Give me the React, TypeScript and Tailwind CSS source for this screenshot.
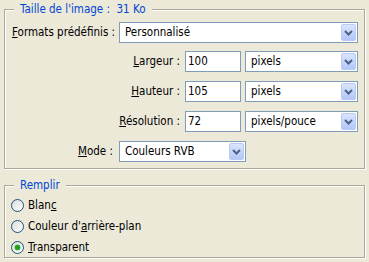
import React from "react";

function Chevron() {
  return (
    <svg width="9" height="6" viewBox="0 0 9 6">
      <path d="M1 1 L4.5 4.5 L8 1" fill="none" stroke="#4D6185" strokeWidth="2" />
    </svg>
  );
}

function Combo({ width, text }: { width: string; text: string }) {
  return (
    <div className={`relative h-[21px] border border-[#7F9DB9] bg-white flex items-center pl-[5px] ${width}`}>
      <span>{text}</span>
      <div className="absolute right-[1px] top-[1px] bottom-[1px] w-[15px] rounded-[2px] border border-[#B9CBF3] bg-gradient-to-b from-[#DAE5FD] to-[#B2C7F8] flex items-center justify-center">
        <Chevron />
      </div>
    </div>
  );
}

function Input({ text }: { text: string }) {
  return (
    <div className="h-[21px] w-[56px] border border-[#7F9DB9] bg-white flex items-center pl-[2px]">
      {text}
    </div>
  );
}

function Radio({ checked, children }: { checked?: boolean; children: React.ReactNode }) {
  return (
    <div className="flex items-center h-[13px]">
      <div className="w-[13px] h-[13px] rounded-full border border-[#1C5180] bg-gradient-to-br from-[#DCDCD7] to-white flex items-center justify-center">
        {checked && (
          <div className="w-[5px] h-[5px] rounded-full bg-[#21A121] shadow-[0_0_0_0.5px_#5FC05F]" />
        )}
      </div>
      <span className="ml-[4px]">{children}</span>
    </div>
  );
}

const U = ({ children }: { children: React.ReactNode }) => (
  <span className="underline underline-offset-[1px]">{children}</span>
);

export default function App() {
  return (
    <div className="w-[369px] h-[262px] bg-[#ECE9D8] pt-[9px] pl-[4px] text-[11.5px] leading-[13px] text-black font-['DejaVu_Sans_Condensed','Liberation_Sans',sans-serif]">
      <div className="relative w-[361px] h-[160px] border border-[#ACA899] shadow-[inset_1px_1px_0_#fff,1px_1px_0_#fff]">
        <div className="absolute -top-[8px] left-[9px] px-[6px] bg-[#ECE9D8] text-[#0046D5] leading-[14px] whitespace-pre">
          {"Taille de l'image :  31 Ko"}
        </div>
        <div className="flex flex-col pt-[12px]">
          <div className="flex items-center">
            <div className="w-[114px] pl-[7px]">
              <U>F</U>ormats prédéfinis :
            </div>
            <Combo width="w-[239px]" text="Personnalisé" />
          </div>
          <div className="flex items-center mt-[8px]">
            <div className="w-[180px] pr-[5px] text-right">
              <U>L</U>argeur :
            </div>
            <Input text="100" />
            <div className="ml-[4px]">
              <Combo width="w-[113px]" text="pixels" />
            </div>
          </div>
          <div className="flex items-center mt-[9px]">
            <div className="w-[180px] pr-[5px] text-right">
              <U>H</U>auteur :
            </div>
            <Input text="105" />
            <div className="ml-[4px]">
              <Combo width="w-[113px]" text="pixels" />
            </div>
          </div>
          <div className="flex items-center mt-[9px]">
            <div className="w-[180px] pr-[5px] text-right">
              <U>R</U>ésolution :
            </div>
            <Input text="72" />
            <div className="ml-[4px]">
              <Combo width="w-[113px]" text="pixels/pouce" />
            </div>
          </div>
          <div className="flex items-center mt-[9px]">
            <div className="w-[114px] pr-[6px] text-right">
              <U>M</U>ode :
            </div>
            <Combo width="w-[127px]" text="Couleurs RVB" />
          </div>
        </div>
      </div>

      <div className="relative mt-[16px] w-[361px] h-[73px] border border-[#ACA899] shadow-[inset_1px_1px_0_#fff,1px_1px_0_#fff]">
        <div className="absolute -top-[8px] left-[9px] px-[6px] bg-[#ECE9D8] text-[#0046D5] leading-[14px]">
          Remplir
        </div>
        <div className="flex flex-col gap-[8px] pt-[13px] pl-[6px]">
          <Radio>
            Blan<U>c</U>
          </Radio>
          <Radio>
            Couleur d'<U>a</U>rrière-plan
          </Radio>
          <Radio checked>
            <U>T</U>ransparent
          </Radio>
        </div>
      </div>
    </div>
  );
}
